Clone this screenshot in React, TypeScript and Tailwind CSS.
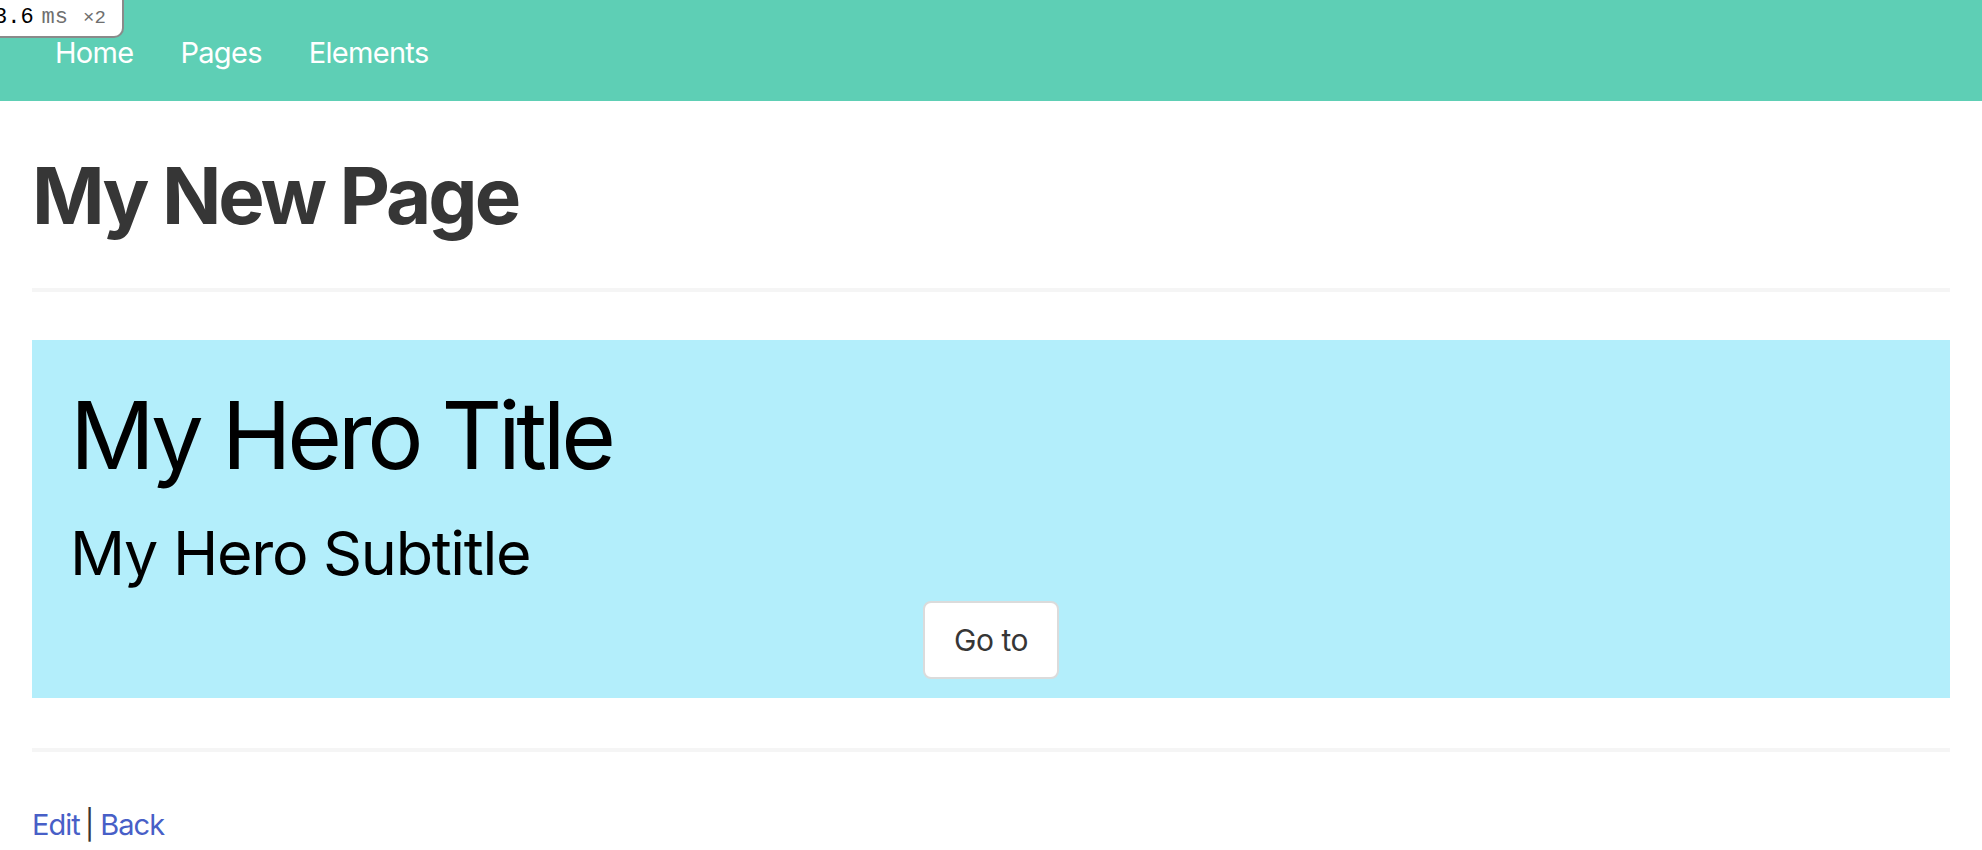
import React from "react";

export default function App() {
  return (
    <div className="relative min-h-screen bg-white font-['Inter',sans-serif]">
      <nav className="flex h-[101px] items-center gap-[47px] bg-[#5ecfb5] pl-[55px] text-[29px] leading-none tracking-[-0.7px] text-white">
        <a className="pt-[3px]">Home</a>
        <a className="pt-[3px]">Pages</a>
        <a className="pt-[3px]">Elements</a>
      </nav>

      <div className="absolute left-0 top-0 flex h-[38px] w-[124px] items-center overflow-hidden rounded-br-[10px] border-b-2 border-r-2 border-[#8a8a8a] bg-white font-['Liberation_Mono',monospace] leading-none">
        <span className="ml-[-6px] whitespace-nowrap text-[22px] text-black">3.6</span>
        <span className="ml-[8px] text-[22px] text-[#6f6f6f]">ms</span>
        <span className="ml-[15px] text-[19px] text-[#6f6f6f]">×2</span>
      </div>

      <main className="px-[32px]">
        <h1 className="mt-[56px] text-[78px] font-bold leading-none tracking-[-3px] text-[#363636]">
          My New Page
        </h1>
        <hr className="mt-[53px] h-[4px] border-0 bg-[#f5f5f5]" />

        <section className="mt-[48px] flex flex-col bg-[#b3eefb] px-[38px] pb-[19px] pt-[48px]">
          <h2 className="text-[94px] font-normal leading-none tracking-[-4.3px] text-black">
            My Hero Title
          </h2>
          <p className="mt-[41px] text-[61px] leading-none tracking-[-1.3px] text-black">
            My Hero Subtitle
          </p>
          <div className="mt-[17px] flex justify-center">
            <button className="flex h-[78px] w-[136px] items-center justify-center rounded-[8px] border-2 border-[#dbdbdb] bg-white text-[30px] leading-none tracking-[-0.5px] text-[#363636]">
              Go to
            </button>
          </div>
        </section>

        <hr className="mt-[50px] h-[4px] border-0 bg-[#f5f5f5]" />

        <div className="mt-[58px] flex items-center text-[29px] leading-none tracking-[-1px]">
          <a className="text-[#485fc7]">Edit</a>
          <span className="ml-[5px] mr-[7px] text-[#363636]">|</span>
          <a className="text-[#485fc7]">Back</a>
        </div>
      </main>
    </div>
  );
}
